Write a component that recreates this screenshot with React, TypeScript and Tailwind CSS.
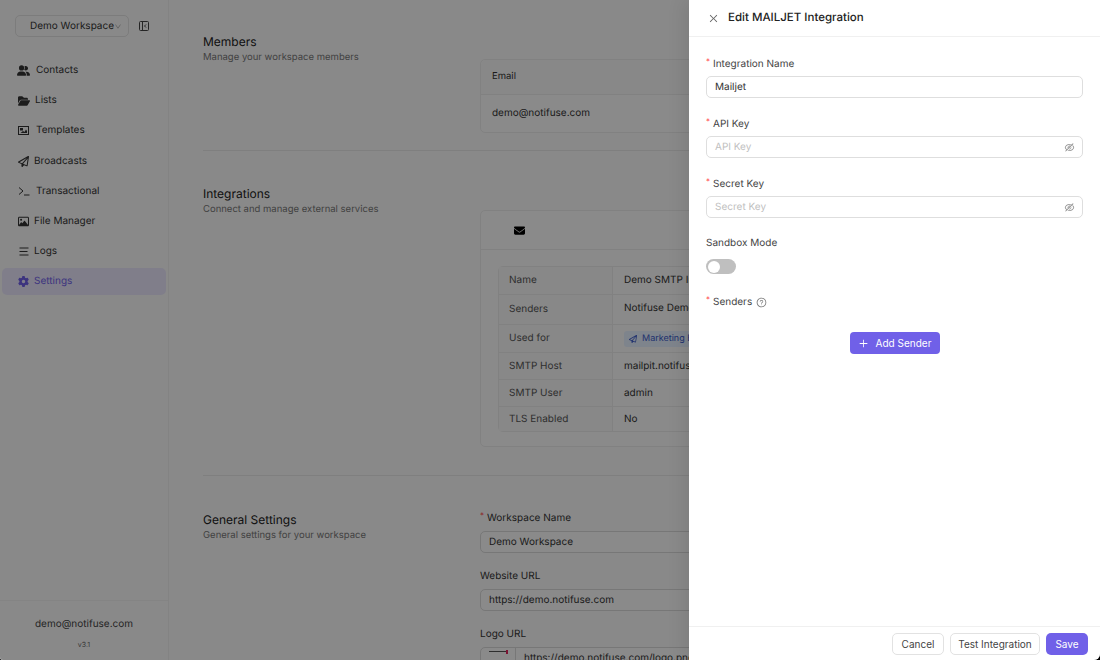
import type { ReactNode } from "react";
import { FaUserGroup, FaFolderOpen, FaRegPaperPlane, FaRegImage, FaGear, FaEnvelope } from "react-icons/fa6";
import {
  AiOutlineClose,
  AiOutlineDown,
  AiOutlineEyeInvisible,
  AiOutlinePlus,
  AiOutlineQuestionCircle,
} from "react-icons/ai";

const navItems: { label: string; icon: ReactNode; gap: string; active?: boolean }[] = [
  { label: "Contacts", icon: <FaUserGroup size={13} />, gap: "gap-[6px]" },
  { label: "Lists", icon: <FaFolderOpen size={12} />, gap: "gap-[5px]" },
  {
    label: "Templates",
    icon: (
      <svg width="11" height="11" viewBox="0 0 11 11" fill="currentColor">
        <path d="M0 1h11v9H0zm1 1v7h9V2z" />
        <path d="M2 3h3v2.5H2zM2.5 8 5 6l1.5 1L8 4.5 9 6v2z" />
      </svg>
    ),
    gap: "gap-[6px]",
  },
  { label: "Broadcasts", icon: <FaRegPaperPlane size={11} />, gap: "gap-[4px]" },
  {
    label: "Transactional",
    icon: (
      <svg width="12" height="12" viewBox="0 0 12 12" fill="none" stroke="currentColor" strokeWidth="1">
        <path d="M1 2.5 5 6 1 9.5M6 10h5.5" />
      </svg>
    ),
    gap: "gap-[6px]",
  },
  { label: "File Manager", icon: <FaRegImage size={11} />, gap: "gap-[4px]" },
  {
    label: "Logs",
    icon: (
      <svg width="10" height="9" viewBox="0 0 10 9" stroke="currentColor" strokeWidth="1">
        <path d="M.5 1h9M.5 4.5h8M.5 8h9" />
      </svg>
    ),
    gap: "gap-[4px]",
  },
  { label: "Settings", icon: <FaGear size={11} />, gap: "gap-[4px]", active: true },
];

const rows: { name: string; value: ReactNode; h: string }[] = [
  { name: "Name", value: "Demo SMTP Integration", h: "h-[27px]" },
  { name: "Senders", value: <span className="relative -top-[1px]">Notifuse Demo</span>, h: "h-[30px]" },
  {
    name: "Used for",
    value: (
      <span className="inline-flex items-center gap-[5px] bg-[#e6f0ff] text-[#3b5bc9] rounded-[3px] px-[5px] h-[16px] text-[9px]">
        <FaRegPaperPlane size={8} />
        Marketing Emails
      </span>
    ),
    h: "h-[28px]",
  },
  { name: "SMTP Host", value: "mailpit.notifuse.com", h: "h-[27px]" },
  { name: "SMTP User", value: "admin", h: "h-[27px]" },
  { name: "TLS Enabled", value: "No", h: "h-[25px]" },
];

function Required() {
  return <span className="text-[#ff4d4f] text-[8px] mr-[3px] relative -top-[3px]">*</span>;
}

function DrawerField({ label, value, placeholder, secret }: { label: string; value?: string; placeholder?: string; secret?: boolean }) {
  return (
    <div className="mb-[18px]">
      <div className="h-[16px] flex items-center text-[10px] text-[#444]">
        <Required />
        {label}
      </div>
      <div className="mt-[4px] h-[22px] border border-[#dedede] rounded-[5px] flex items-center justify-between pl-[8px] pr-[7px] text-[10px]">
        {value ? <span className="text-[#333]">{value}</span> : <span className="text-[#bfbfbf]">{placeholder}</span>}
        {secret && <AiOutlineEyeInvisible size={11} className="text-[#8c8c8c]" />}
      </div>
    </div>
  );
}

function PageField({ label, value, required }: { label: string; value: string; required?: boolean }) {
  return (
    <div className="mb-[15px]">
      <div className="h-[16px] flex items-center text-[10px] text-[#333]">
        {required && <Required />}
        {label}
      </div>
      <div className="mt-[5px] h-[22px] border border-[#d9d9d9] rounded-[5px] bg-[#fbfbfb] flex items-center px-[8px] text-[10px] text-[#333]">
        {value}
      </div>
    </div>
  );
}

function SectionHead({ title, desc }: { title: string; desc: string }) {
  return (
    <div className="w-[277px] shrink-0">
      <div className="text-[12px] leading-[16px] text-[#222]">{title}</div>
      <div className="text-[9.5px] leading-[16px] text-[#777]">{desc}</div>
    </div>
  );
}

export default function App() {
  return (
    <div className="h-[660px] w-[1100px] bg-black">
      <div className="relative h-[660px] w-[1100px] overflow-hidden flex rounded-bl-[3px] rounded-br-[6px] bg-[#fafafa] font-['Inter',sans-serif] [text-rendering:geometricPrecision]">
        <aside className="w-[169px] shrink-0 border-r border-[#eeeeee] bg-[#fafafa] flex flex-col">
          <div className="flex items-center pl-[15px] pt-[15px]">
            <div className="w-[114px] h-[22px] border border-[#e2e2e2] rounded-[5px] flex items-center justify-between pl-[14px] pr-[6px] text-[10px] text-[#333] whitespace-nowrap">
              Demo Workspace
              <AiOutlineDown size={9} className="text-[#aaa]" />
            </div>
            <svg width="10" height="10" viewBox="0 0 10 10" fill="none" stroke="#444" strokeWidth="1" className="ml-[10px]">
              <rect x=".5" y=".5" width="9" height="9" rx="1" />
              <path d="M3.5 .5v9M7 3.5 5.5 5 7 6.5" />
            </svg>
          </div>
          <nav className="mt-[20px] px-[2px] flex flex-col">
            {navItems.map((item) => (
              <div
                key={item.label}
                className={`h-[27px] mb-[3.2px] rounded-[5px] pl-[15px] flex items-center text-[10px] ${item.gap} ${
                  item.active ? "bg-[#e9e6fb] text-[#7060e8]" : "text-[#333]"
                }`}
              >
                <span className="w-[13px] flex justify-center">{item.icon}</span>
                {item.label}
              </div>
            ))}
          </nav>
          <div className="mt-auto h-[60px] mx-0 border-t border-[#f0f0f0] flex flex-col items-center pt-[15px]">
            <div className="text-[10px] leading-[16px] text-[#444]">demo@notifuse.com</div>
            <div className="text-[7px] leading-[10px] mt-[8px] text-[#666]">v3.1</div>
          </div>
        </aside>

        <main className="flex-1 pl-[34px] pr-[30px] pt-[34px] min-w-0">
          <section className="flex h-[116px]">
            <SectionHead title="Members" desc="Manage your workspace members" />
            <div className="mt-[25px] flex-1 h-[74px] border border-[#ececec] rounded-[5px] bg-[#fbfbfb] text-[9.5px] text-[#333]">
              <div className="h-[35px] bg-[#f8f8f8] border-b border-[#ececec] flex items-center px-[11px] rounded-t-[5px]">Email</div>
              <div className="h-[37px] flex items-center px-[11px] text-[10px]">demo@notifuse.com</div>
            </div>
          </section>
          <div className="border-t border-[#e8e8e8]" />
          <section className="flex pt-[35px] h-[324px]">
            <SectionHead title="Integrations" desc="Connect and manage external services" />
            <div className="mt-[24px] -ml-[0px] flex-1 h-[237px] border border-[#ececec] rounded-[5px] bg-[#fbfbfb]">
              <div className="h-[39px] border-b border-[#ececec] flex items-center pl-[33px]">
                <FaEnvelope size={11} className="text-black" />
              </div>
              <div className="mx-[17px] mt-[16px] border border-[#ececec] rounded-[5px] text-[10px]">
                {rows.map((r, i) => (
                  <div key={r.name} className={`flex ${r.h} ${i > 0 ? "border-t border-[#ececec]" : ""}`}>
                    <div className="w-[114px] shrink-0 bg-[#f8f8f8] border-r border-[#ececec] flex items-center pl-[10px] text-[#555]">{r.name}</div>
                    <div className="flex-1 flex items-center pl-[11px] text-[#333] whitespace-nowrap">{r.value}</div>
                  </div>
                ))}
              </div>
            </div>
          </section>
          <div className="border-t border-[#e8e8e8]" />
          <section className="flex pt-[36px]">
            <SectionHead title="General Settings" desc="General settings for your workspace" />
            <div className="flex-1 -mt-[2px]">
              <PageField label="Workspace Name" value="Demo Workspace" required />
              <PageField label="Website URL" value="https://demo.notifuse.com" />
              <div className="h-[16px] flex items-center text-[10px] text-[#333]">Logo URL</div>
              <div className="mt-[5px] h-[22px] border border-[#d9d9d9] rounded-[5px] bg-[#fbfbfb] flex items-center text-[10px] text-[#333]">
                <div className="w-[35px] h-full border-r border-[#d9d9d9] flex items-start justify-center pt-[3px]">
                  <div className="w-[18px] h-[12px] border-t border-[#555] relative">
                    <span className="absolute -top-[2px] -right-[1px] w-[2px] h-[4px] bg-[#e0245e]" />
                  </div>
                </div>
                <span className="pl-[8px] whitespace-nowrap">https://demo.notifuse.com/logo.png</span>
              </div>
            </div>
          </section>
        </main>

        {/* mask + drawer sit above the page */}
        <div className="absolute inset-0 bg-black/45" />
        <div className="absolute top-0 right-0 bottom-0 w-[411px] bg-white flex flex-col shadow-[-6px_0_16px_rgba(0,0,0,0.08)]">
          <header className="h-[37px] shrink-0 border-b border-[#f0f0f0] flex items-center pl-[19px]">
            <AiOutlineClose size={11} className="text-[#666]" />
            <span className="ml-[9px] text-[11.5px] font-medium text-[#222]">Edit MAILJET Integration</span>
          </header>
          <div className="flex-1 px-[17px] pt-[19px]">
            <DrawerField label="Integration Name" value="Mailjet" />
            <DrawerField label="API Key" placeholder="API Key" secret />
            <DrawerField label="Secret Key" placeholder="Secret Key" secret />
            <div className="-mt-[1px] h-[16px] flex items-center text-[10px] text-[#444]">Sandbox Mode</div>
            <div className="mt-[8px] w-[30px] h-[15px] rounded-full bg-[#bfbfbf] p-[1.5px]">
              <div className="w-[12px] h-[12px] rounded-full bg-white" />
            </div>
            <div className="mt-[20px] h-[16px] flex items-center text-[10px] text-[#444]">
              <Required />
              Senders
              <AiOutlineQuestionCircle size={11} className="ml-[4px] text-[#777]" />
            </div>
            <div className="mt-[22px] flex justify-center">
              <button className="h-[22px] w-[90px] rounded-[4px] bg-[#7060e8] text-white text-[10px] flex items-center justify-center gap-[7px]">
                <AiOutlinePlus size={11} />
                Add Sender
              </button>
            </div>
          </div>
          <footer className="h-[34px] shrink-0 border-t border-[#f0f0f0] flex items-start justify-end gap-[6px] pr-[12px] pt-[6px] text-[10px]">
            <button className="h-[22px] w-[52px] border border-[#e2e2e2] rounded-[5px] text-[#444]">Cancel</button>
            <button className="h-[22px] w-[90px] border border-[#e2e2e2] rounded-[5px] text-[#444]">Test Integration</button>
            <button className="h-[22px] w-[42px] rounded-[5px] bg-[#7060e8] text-white">Save</button>
          </footer>
        </div>
      </div>
    </div>
  );
}
